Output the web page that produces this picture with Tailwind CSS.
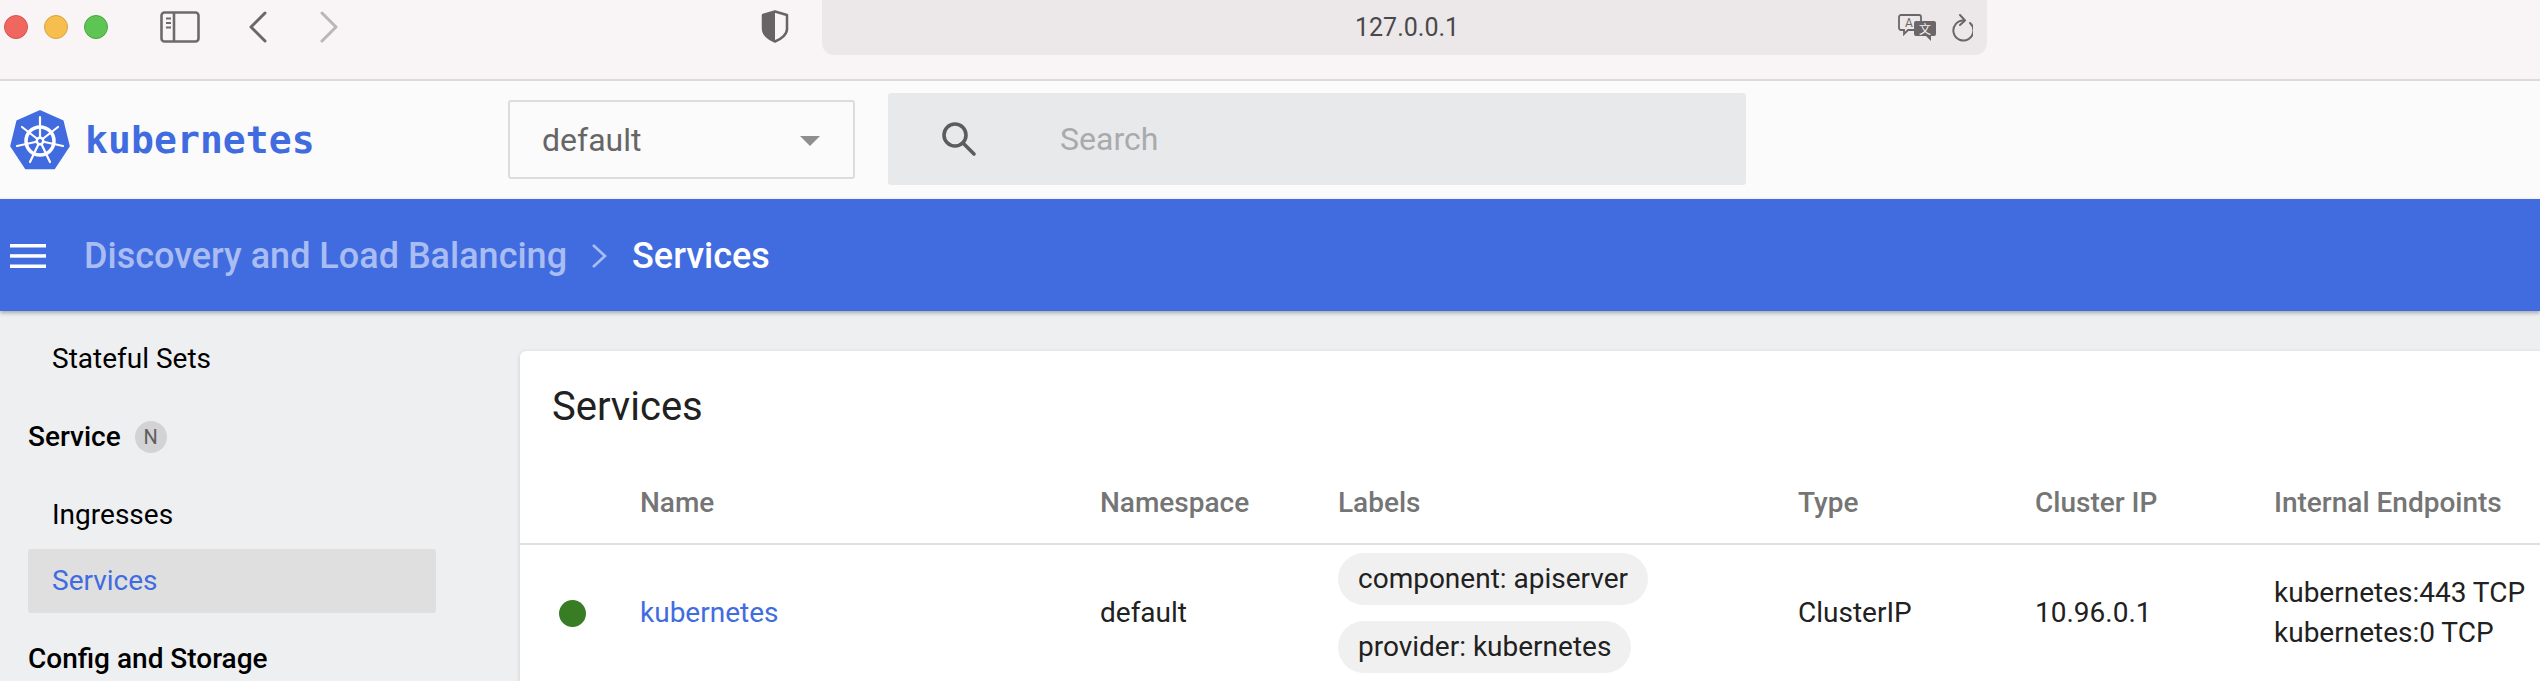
<!DOCTYPE html>
<html lang="en">
<head>
  <meta charset="UTF-8" />
  <title>Services - Kubernetes Dashboard</title>
  <script src="https://cdn.jsdelivr.net/npm/@tailwindcss/browser@4"></script>
</head>
<body class="h-[681px] overflow-hidden flex flex-col bg-[#eeeff1] font-['Roboto',sans-serif]">

  <!-- browser chrome -->
  <div class="h-[81px] shrink-0 flex bg-[#f9f5f6] border-b-2 border-[#dcdadb]">
    <div class="flex h-[54px] items-center pl-[4px]">
      <span class="w-[24px] h-[24px] rounded-full bg-[#f0675f] border border-[#d9544d]"></span>
      <span class="w-[24px] h-[24px] rounded-full bg-[#f6bd4f] border border-[#dda23a] ml-[16px]"></span>
      <span class="w-[24px] h-[24px] rounded-full bg-[#5ec453] border border-[#4ba741] ml-[16px]"></span>

      <svg class="ml-[52px] w-[40px] h-[32px]" viewBox="0 0 40 32" fill="none" stroke="#6e6a6b" stroke-width="2.6">
        <rect x="1.5" y="1.5" width="37" height="29" rx="3" />
        <path d="M14 1.5v29" />
        <path d="M6 7.5h5M6 12h5M6 16.5h5" stroke-width="2" />
      </svg>
      <svg class="ml-[48px] w-[20px] h-[32px]" viewBox="0 0 20 32" fill="none" stroke="#6b6768" stroke-width="3" stroke-linecap="round" stroke-linejoin="round">
        <path d="M17 2 3 16l14 14" />
      </svg>
      <svg class="ml-[51px] w-[20px] h-[32px]" viewBox="0 0 20 32" fill="none" stroke="#bab7b8" stroke-width="3" stroke-linecap="round" stroke-linejoin="round">
        <path d="M3 2l14 14L3 30" />
      </svg>
    </div>

    <svg class="ml-[422px] mt-[10px] w-[28px] h-[33px]" viewBox="0 0 28 33">
      <path d="M14 1.5 26 5v14c0 5-5 10-12 12.500C7 29 2 24 2 19V5z" fill="#f9f5f6" stroke="#686465" stroke-width="2.500" stroke-linejoin="round" />
      <path d="M14 1.500 2 5v14c0 5 5 10 12 12.500z" fill="#686465" />
    </svg>

    <div class="ml-[33px] w-[1165px] h-[55px] rounded-b-[12px] bg-[#ece8e9] flex items-center relative">
      <span class="absolute left-[533px] text-[25px] text-[#4a4849]">127.0.0.1</span>
      <div class="ml-auto flex items-center pr-[14px]">
        <svg class="w-[38px] h-[28px]" viewBox="0 0 38 28">
          <path d="M3 1h18a2 2 0 0 1 2 2v11a2 2 0 0 1-2 2H10l-4 4v-4H3a2 2 0 0 1-2-2V3a2 2 0 0 1 2-2z" fill="none" stroke="#6b6768" stroke-width="1.800" />
          <text x="7" y="13" font-size="12" fill="#6b6768" font-family="Roboto">A</text>
          <path d="M18 7h18a2 2 0 0 1 2 2v11a2 2 0 0 1-2 2h-3v5l-5-5H18a2 2 0 0 1-2-2V9a2 2 0 0 1 2-2z" fill="#6b6768" />
          <text x="21" y="20" font-size="12" fill="#f4f1f2" font-family="'Noto Sans CJK SC'">文</text>
        </svg>
        <svg class="ml-[13px] w-[24px] h-[28px]" viewBox="0 0 24 28" fill="none" stroke="#6b6768" stroke-width="2" stroke-linecap="round" stroke-linejoin="round">
          <path d="M15 6.500A10 10 0 1 0 21 9" />
          <path d="M11 1l5 5.500-5 4.500" />
        </svg>
      </div>
    </div>
  </div>

  <!-- dashboard header -->
  <div class="h-[118px] shrink-0 flex items-center bg-[#fbfbfb]">
    <svg class="ml-[10px] w-[60px] h-[60px]" viewBox="0 0 60 60">
      <path d="M30 1.500 52.500 11.500 58.500 36 44 58H16L1.500 36 7.500 11.500z" fill="#416cdf" stroke="#416cdf" stroke-width="2.500" stroke-linejoin="round" />
      <circle cx="30" cy="31" r="14" fill="none" stroke="#fff" stroke-width="3.500" />
      <path d="M30 31V7M30 31 48 17M30 31 53 36M30 31 40 52M30 31 20 52M30 31 7 36M30 31 12 17" stroke="#fff" stroke-width="2.200" stroke-linecap="round" />
      <circle cx="30" cy="31" r="4.500" fill="#fff" />
      <circle cx="30" cy="31" r="2" fill="#416cdf" />
    </svg>
    <span class="ml-[15px] w-[227px] text-[38px] leading-none font-bold tracking-[0.1px] text-[#416cdf] font-['DejaVu_Sans_Mono',monospace]">kubernetes</span>

    <div class="ml-[196px] w-[347px] h-[79px] -mt-[1px] flex items-center justify-between bg-[#fbfbfb] border-2 border-[#dcdcdc] rounded-[3px] pl-[32px] pr-[33px]">
      <span class="text-[32px] text-[#666]">default</span>
      <span class="w-0 h-0 border-x-[10px] border-x-transparent border-t-[10px] border-t-[#8f8f8f] mt-[3px]"></span>
    </div>

    <div class="ml-[33px] w-[858px] h-[92px] -mt-[2px] flex items-center bg-[#e8e9eb] rounded-[3px]">
      <svg class="ml-[53px] w-[36px] h-[36px]" viewBox="0 0 36 36" fill="none" stroke="#5c5c5e" stroke-width="3.600" stroke-linecap="round">
        <circle cx="14" cy="14" r="11" />
        <path d="M22.500 22.500 33 33" />
      </svg>
      <span class="ml-[83px] text-[32px] text-[#a9aaac]">Search</span>
    </div>
  </div>

  <!-- breadcrumb bar -->
  <div class="h-[112px] shrink-0 flex items-center bg-[#416cdf] pt-[2px] shadow-[0_2px_4px_rgba(0,0,0,0.3)] relative z-10">
    <svg class="ml-[10px] w-[36px] h-[24px]" viewBox="0 0 36 24" fill="#fff">
      <rect width="36" height="3.500" />
      <rect y="10.200" width="36" height="3.500" />
      <rect y="20.500" width="36" height="3.500" />
    </svg>
    <span class="ml-[38px] text-[36px] font-medium text-[#a9bdf3]">Discovery and Load Balancing</span>
    <svg class="ml-[24px] w-[16px] h-[30px]" viewBox="0 0 16 30" fill="none" stroke="#a9bdf3" stroke-width="2.600">
      <path d="M2 4l12 11L2 26" />
    </svg>
    <span class="ml-[25px] text-[36px] font-medium text-white">Services</span>
  </div>

  <div class="flex-1 flex min-h-0">
    <!-- sidebar -->
    <nav class="w-[520px] shrink-0 text-[28px] text-black">
      <div class="h-[64px] mt-[16px] flex items-center pl-[52px]">Stateful Sets</div>
      <div class="h-[64px] mt-[14px] flex items-center pl-[28px] font-medium">
        Service
        <span class="ml-[14px] w-[32px] h-[32px] rounded-full bg-[#d3d3d5] flex items-center justify-center text-[20px] font-normal text-[#5e5e5e]">N</span>
      </div>
      <div class="h-[64px] mt-[14px] flex items-center pl-[52px]">Ingresses</div>
      <div class="h-[64px] ml-[28px] w-[408px] mt-[2px] flex items-center pl-[24px] bg-[#dfdfdf] rounded-[3px] text-[#416cdf]">Services</div>
      <div class="h-[64px] mt-[14px] flex items-center pl-[28px] font-medium">Config and Storage</div>
    </nav>

    <!-- services card -->
    <main class="flex-1 mt-[40px] bg-white rounded-tl-[6px] shadow-[0_1px_4px_rgba(0,0,0,0.15)] min-w-0 overflow-hidden">
      <h1 class="h-[112px] flex items-center pl-[32px] text-[40px] text-[#212121]">Services</h1>

      <div class="grid grid-cols-[120px_460px_238px_460px_237px_239px_266px] h-[82px] items-center border-b-2 border-[#e0e0e0] text-[28px] font-medium text-[#757575]">
        <span></span>
        <span>Name</span>
        <span>Namespace</span>
        <span>Labels</span>
        <span>Type</span>
        <span>Cluster IP</span>
        <span class="whitespace-nowrap">Internal Endpoints</span>
      </div>

      <div class="grid grid-cols-[120px_460px_238px_460px_237px_239px_266px] items-center text-[28px] text-[#212121] pt-[8px]">
        <span class="ml-[39px] w-[27px] h-[27px] rounded-full bg-[#387d24]"></span>
        <a class="text-[#416cdf]">kubernetes</a>
        <span>default</span>
        <div class="flex flex-col items-start gap-[16px]">
          <span class="h-[52px] flex items-center px-[20px] rounded-full bg-[#f0f0f0]">component: apiserver</span>
          <span class="h-[52px] flex items-center px-[20px] rounded-full bg-[#f0f0f0]">provider: kubernetes</span>
        </div>
        <span>ClusterIP</span>
        <span>10.96.0.1</span>
        <div class="leading-[40px] whitespace-nowrap">
          <div>kubernetes:443 TCP</div>
          <div>kubernetes:0 TCP</div>
        </div>
      </div>
    </main>
  </div>
</body>
</html>
